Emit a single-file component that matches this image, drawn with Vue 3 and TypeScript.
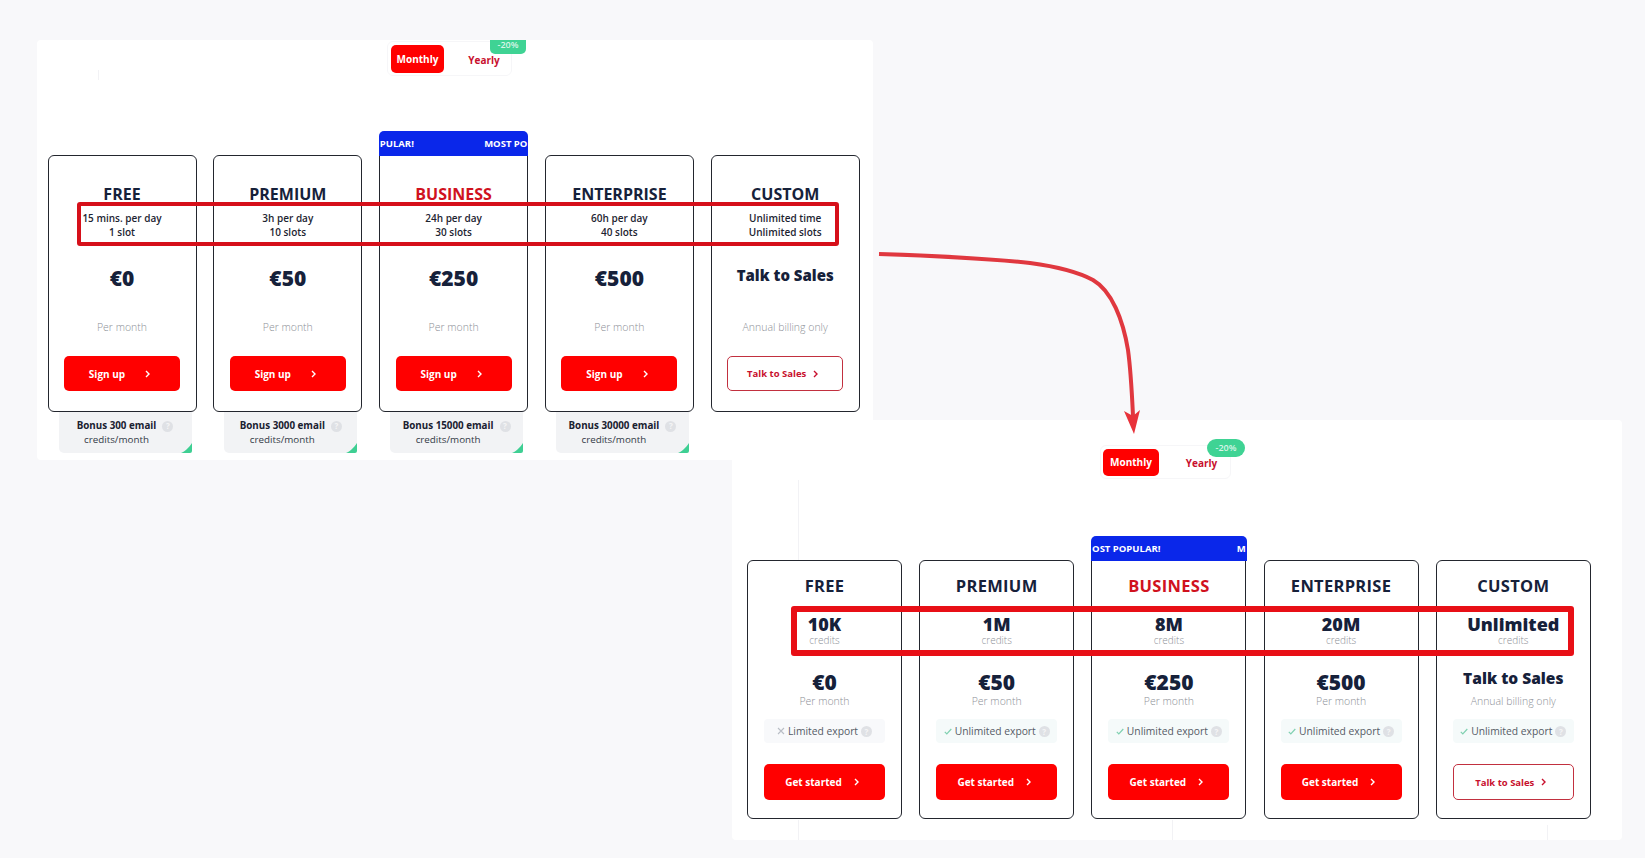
<script setup lang="ts">
interface OldPlan {
  name: string
  lines: string[]
  price: string
  period: string
  cta: string
  bonus?: string
}

interface NewPlan {
  name: string
  credits: string
  price: string
  period: string
  exportLabel: string
  cta: string
}

const oldPlans: OldPlan[] = [
  { name: 'FREE', lines: ['15 mins. per day', '1 slot'], price: '€0', period: 'Per month', cta: 'Sign up', bonus: 'Bonus 300 email' },
  { name: 'PREMIUM', lines: ['3h per day', '10 slots'], price: '€50', period: 'Per month', cta: 'Sign up', bonus: 'Bonus 3000 email' },
  { name: 'BUSINESS', lines: ['24h per day', '30 slots'], price: '€250', period: 'Per month', cta: 'Sign up', bonus: 'Bonus 15000 email' },
  { name: 'ENTERPRISE', lines: ['60h per day', '40 slots'], price: '€500', period: 'Per month', cta: 'Sign up', bonus: 'Bonus 30000 email' },
  { name: 'CUSTOM', lines: ['Unlimited time', 'Unlimited slots'], price: 'Talk to Sales', period: 'Annual billing only', cta: 'Talk to Sales' },
]

const newPlans: NewPlan[] = [
  { name: 'FREE', credits: '10K', price: '€0', period: 'Per month', exportLabel: 'Limited export', cta: 'Get started' },
  { name: 'PREMIUM', credits: '1M', price: '€50', period: 'Per month', exportLabel: 'Unlimited export', cta: 'Get started' },
  { name: 'BUSINESS', credits: '8M', price: '€250', period: 'Per month', exportLabel: 'Unlimited export', cta: 'Get started' },
  { name: 'ENTERPRISE', credits: '20M', price: '€500', period: 'Per month', exportLabel: 'Unlimited export', cta: 'Get started' },
  { name: 'CUSTOM', credits: 'Unlimited', price: 'Talk to Sales', period: 'Annual billing only', exportLabel: 'Unlimited export', cta: 'Talk to Sales' },
]
</script>

<template>
  <div class="canvas">
    <!-- old pricing -->
    <section class="panel panel-old">
      <i class="faint faint-a"></i>
      <div class="toggle">
        <span class="toggle-on">Monthly</span>
        <span class="toggle-off">Yearly</span>
        <span class="discount">-20%</span>
      </div>
      <div class="plans">
        <div v-for="plan in oldPlans" :key="plan.name" class="plan-col">
          <div class="card" :class="{ popular: plan.name === 'BUSINESS' }">
            <div v-if="plan.name === 'BUSINESS'" class="banner"><span>PULAR!</span><span>MOST PO</span></div>
            <h3 class="title">{{ plan.name }}</h3>
            <div class="quota">
              <div v-for="line in plan.lines" :key="line">{{ line }}</div>
            </div>
            <div class="price" :class="{ talk: plan.name === 'CUSTOM' }">{{ plan.price }}</div>
            <div class="period">{{ plan.period }}</div>
            <a class="cta" :class="{ outline: plan.name === 'CUSTOM', wide: plan.name !== 'CUSTOM' }">
              {{ plan.cta }}
              <svg width="5" height="8" viewBox="0 0 5 8"><path d="M1 1l3 3-3 3" fill="none" stroke="currentColor" stroke-width="1.4" /></svg>
            </a>
          </div>
          <div v-if="plan.bonus" class="bonus">
            <b>{{ plan.bonus }}</b>
            <span class="help">?</span>
            <span>credits/month</span>
            <svg class="corner" width="11" height="10" viewBox="0 0 11 10"><path d="M0 10C3 9 8 5 11 0V8a2 2 0 0 1-2 2z" fill="#3ecf93" /></svg>
          </div>
        </div>
      </div>
    </section>

    <!-- new pricing -->
    <section class="panel panel-new">
      <i class="faint faint-b"></i>
      <i class="faint faint-c"></i>
      <i class="faint faint-d"></i>
      <i class="faint faint-e"></i>
      <div class="toggle">
        <span class="toggle-on">Monthly</span>
        <span class="toggle-off">Yearly</span>
        <span class="discount">-20%</span>
      </div>
      <div class="plans">
        <div v-for="plan in newPlans" :key="plan.name" class="card" :class="{ popular: plan.name === 'BUSINESS' }">
          <div v-if="plan.name === 'BUSINESS'" class="banner"><span>OST POPULAR!</span><span>M</span></div>
          <h3 class="title">{{ plan.name }}</h3>
          <div class="credits">{{ plan.credits }}</div>
          <div class="credits-label">credits</div>
          <div class="price" :class="{ talk: plan.name === 'CUSTOM' }">{{ plan.price }}</div>
          <div class="period">{{ plan.period }}</div>
          <div class="export" :class="{ yes: plan.name !== 'FREE' }">
            <svg v-if="plan.name === 'FREE'" width="8" height="8" viewBox="0 0 8 8"><path d="M1 1l6 6M7 1L1 7" stroke="#b9bec6" stroke-width="1.1" /></svg>
            <svg v-else width="8" height="7" viewBox="0 0 8 7"><path d="M.8 3.8l2 2L7.3 1" fill="none" stroke="#7fd0b0" stroke-width="1.2" /></svg>
            {{ plan.exportLabel }}
            <span class="help">?</span>
          </div>
          <a class="cta" :class="{ outline: plan.name === 'CUSTOM' }">
            {{ plan.cta }}
            <svg width="5" height="8" viewBox="0 0 5 8"><path d="M1 1l3 3-3 3" fill="none" stroke="currentColor" stroke-width="1.4" /></svg>
          </a>
        </div>
      </div>
    </section>

    <!-- annotations drawn on top -->
    <div class="mark mark-old"></div>
    <div class="mark mark-new"></div>
    <svg class="arrow" width="1645" height="858" viewBox="0 0 1645 858">
      <path d="M879 254C940 256 993 259 1030 263C1060 267 1080 273 1093 280C1112 291 1123 320 1128 350C1131 372 1132 395 1133 416" fill="none" stroke="#e0383f" stroke-width="4" />
      <path d="M1124 411L1133 416L1140 410L1134 434Z" fill="#e8323a" />
    </svg>
  </div>
</template>

<style>
html,
body {
  margin: 0;
  background: #f8f8fa;
}
</style>

<style scoped>
.canvas {
  position: relative;
  width: 1645px;
  height: 858px;
  overflow: hidden;
  background: #f8f8fa;
  font-family: "Open Sans", "Noto Sans", sans-serif;
  color: #16213a;
}

.panel {
  position: absolute;
  overflow: hidden;
  background: #fff;
  border-radius: 4px;
  box-sizing: border-box;
  height: 420px;
}

.panel-old {
  left: 37px;
  top: 40px;
  width: 836px;
  padding: 1px 0 0 10.5px;
}

.panel-new {
  left: 732px;
  top: 420px;
  width: 890px;
  padding: 25px 0 0 15px;
}

.faint {
  position: absolute;
  width: 1px;
  background: #f2f2f5;
}

.faint-a { left: 61px; top: 30px; height: 10px; }
.faint-b { left: 66px; top: 60px; height: 80px; }
.faint-c { left: 66px; top: 400px; height: 20px; }
.faint-d { left: 440px; top: 400px; height: 20px; }
.faint-e { left: 815px; top: 405px; height: 15px; }

.toggle {
  position: relative;
  display: flex;
  align-items: center;
  box-sizing: border-box;
  border: 1px solid #f6f6f8;
  border-radius: 6px;
  font-size: 10px;
  font-weight: 700;
}

.panel-old .toggle {
  width: 125px;
  height: 35px;
  margin: 0 0 79px 339.5px;
  padding: 0 3px;
}

.panel-new .toggle {
  width: 131px;
  height: 34px;
  margin: 0 0 81px 353px;
  padding: 0 2px;
}

.toggle-on {
  display: flex;
  align-items: center;
  justify-content: center;
  height: 28px;
  background: #ff0000;
  color: #fff;
  border-radius: 5px;
}

.panel-old .toggle-on { width: 53px; }
.panel-new .toggle-on { width: 56px; height: 27px; }

.toggle-off {
  flex: 1;
  text-align: center;
  color: #c8102e;
  padding: 2px 0 0 16px;
}

.discount {
  position: absolute;
  top: -6px;
  right: -15px;
  width: 36px;
  height: 18px;
  line-height: 18px;
  text-align: center;
  background: #3fd394;
  color: #d8f5e8;
  border-radius: 5px;
  font-size: 9px;
  font-weight: 600;
}

.panel-new .discount {
  top: -7px;
  right: -15px;
  width: 38px;
  border-radius: 9px;
}

.plans {
  display: grid;
  align-items: start;
}

.panel-old .plans {
  grid-template-columns: repeat(5, 149px);
  column-gap: 16.8px;
}

.panel-new .plans {
  grid-template-columns: repeat(5, 155px);
  column-gap: 17.2px;
}

.card {
  position: relative;
  box-sizing: border-box;
  display: flex;
  flex-direction: column;
  align-items: center;
  border: 1.3px solid #23262e;
  border-radius: 6px;
}

.panel-old .card { height: 257px; padding: 27px 16px 0; }
.panel-new .card { height: 259px; padding: 14px 16px 0; }

.card.popular {
  border-top-left-radius: 0;
  border-top-right-radius: 0;
}

.banner {
  position: absolute;
  left: -1.3px;
  right: -1.3px;
  top: -25px;
  height: 25px;
  display: flex;
  align-items: center;
  justify-content: space-between;
  padding: 0 1px;
  background: #0a27ea;
  color: #fff;
  border-radius: 5px 5px 0 0;
  font-size: 9.5px;
  font-weight: 700;
  overflow: hidden;
}

.title {
  margin: 0;
  font-size: 16px;
  line-height: 22px;
  font-weight: 700;
  white-space: nowrap;
}

.panel-new .title {
  letter-spacing: 0.3px;
  font-size: 16.5px;
}

.popular .title {
  color: #d0121e;
}

.quota {
  margin-top: 6px;
  font-size: 10px;
  line-height: 14px;
  font-weight: 600;
  text-align: center;
  color: #1d2431;
}

.price {
  margin-top: 25px;
  height: 28px;
  line-height: 28px;
  font-size: 21px;
  font-weight: 800;
}

.price.talk {
  height: 22px;
  line-height: 22px;
  margin-bottom: 6px;
  font-size: 15px;
  font-weight: 800;
}

.period {
  margin-top: 28px;
  font-size: 10.5px;
  line-height: 14px;
  font-weight: 300;
  color: #8d9097;
  white-space: nowrap;
}

.panel-new .price {
  margin-top: 23px;
  height: 26px;
  line-height: 26px;
}

.panel-new .price.talk {
  height: 18px;
  line-height: 18px;
  margin-bottom: 8px;
  font-size: 15.5px;
}

.panel-new .period {
  margin-top: -1px;
}

.credits {
  margin-top: 16px;
  font-size: 18px;
  line-height: 22px;
  font-weight: 800;
}

.credits-label {
  margin-top: -1px;
  font-size: 10px;
  line-height: 12px;
  font-weight: 300;
  color: #8d9097;
}

.export {
  display: flex;
  align-items: center;
  justify-content: center;
  gap: 3px;
  width: 121px;
  height: 24px;
  margin-top: 11px;
  background: #f8f9fb;
  border-radius: 4px;
  font-size: 10.3px;
  color: #555b66;
  white-space: nowrap;
}

.export.yes {
  background: #f5fafa;
}

.help {
  display: inline-flex;
  align-items: center;
  justify-content: center;
  width: 11px;
  height: 11px;
  border-radius: 50%;
  background: #dfe1e5;
  color: #f5f5f6;
  font-size: 8px;
  font-weight: 700;
}

.cta {
  display: flex;
  align-items: center;
  justify-content: center;
  gap: 12px;
  box-sizing: border-box;
  width: 121px;
  height: 36px;
  margin-top: 21px;
  padding-right: 5px;
  background: #ff0000;
  color: #fff;
  border-radius: 5px;
  font-size: 10px;
  font-weight: 700;
  white-space: nowrap;
}

.panel-old .cta {
  width: 116px;
  height: 35px;
  margin-top: 22px;
}

.cta.wide {
  gap: 20px;
}

.cta.outline {
  gap: 7px;
  background: #fff;
  color: #c8102e;
  border: 1.3px solid #c2303f;
  font-size: 9.5px;
}

.bonus {
  position: relative;
  display: grid;
  grid-template-columns: auto 11px;
  column-gap: 6px;
  justify-content: center;
  justify-items: center;
  align-items: center;
  align-content: start;
  box-sizing: border-box;
  width: 133px;
  height: 41px;
  margin-left: 11px;
  padding-top: 7px;
  background: #f2f3f5;
  border-radius: 0 0 5px 5px;
  font-size: 9.8px;
  line-height: 14px;
  color: #333a46;
}

.bonus b {
  color: #1a2130;
}

.corner {
  position: absolute;
  right: 0;
  bottom: 0;
}

.mark {
  position: absolute;
  box-sizing: border-box;
  border-style: solid;
  border-radius: 3px;
  pointer-events: none;
}

.mark-old {
  left: 77px;
  top: 202px;
  width: 762px;
  height: 44px;
  border-width: 4px;
  border-color: #d6101a;
}

.mark-new {
  left: 791px;
  top: 606px;
  width: 783px;
  height: 50px;
  border-width: 6px;
  border-color: #e80f16;
}

.arrow {
  position: absolute;
  left: 0;
  top: 0;
  pointer-events: none;
}
</style>
